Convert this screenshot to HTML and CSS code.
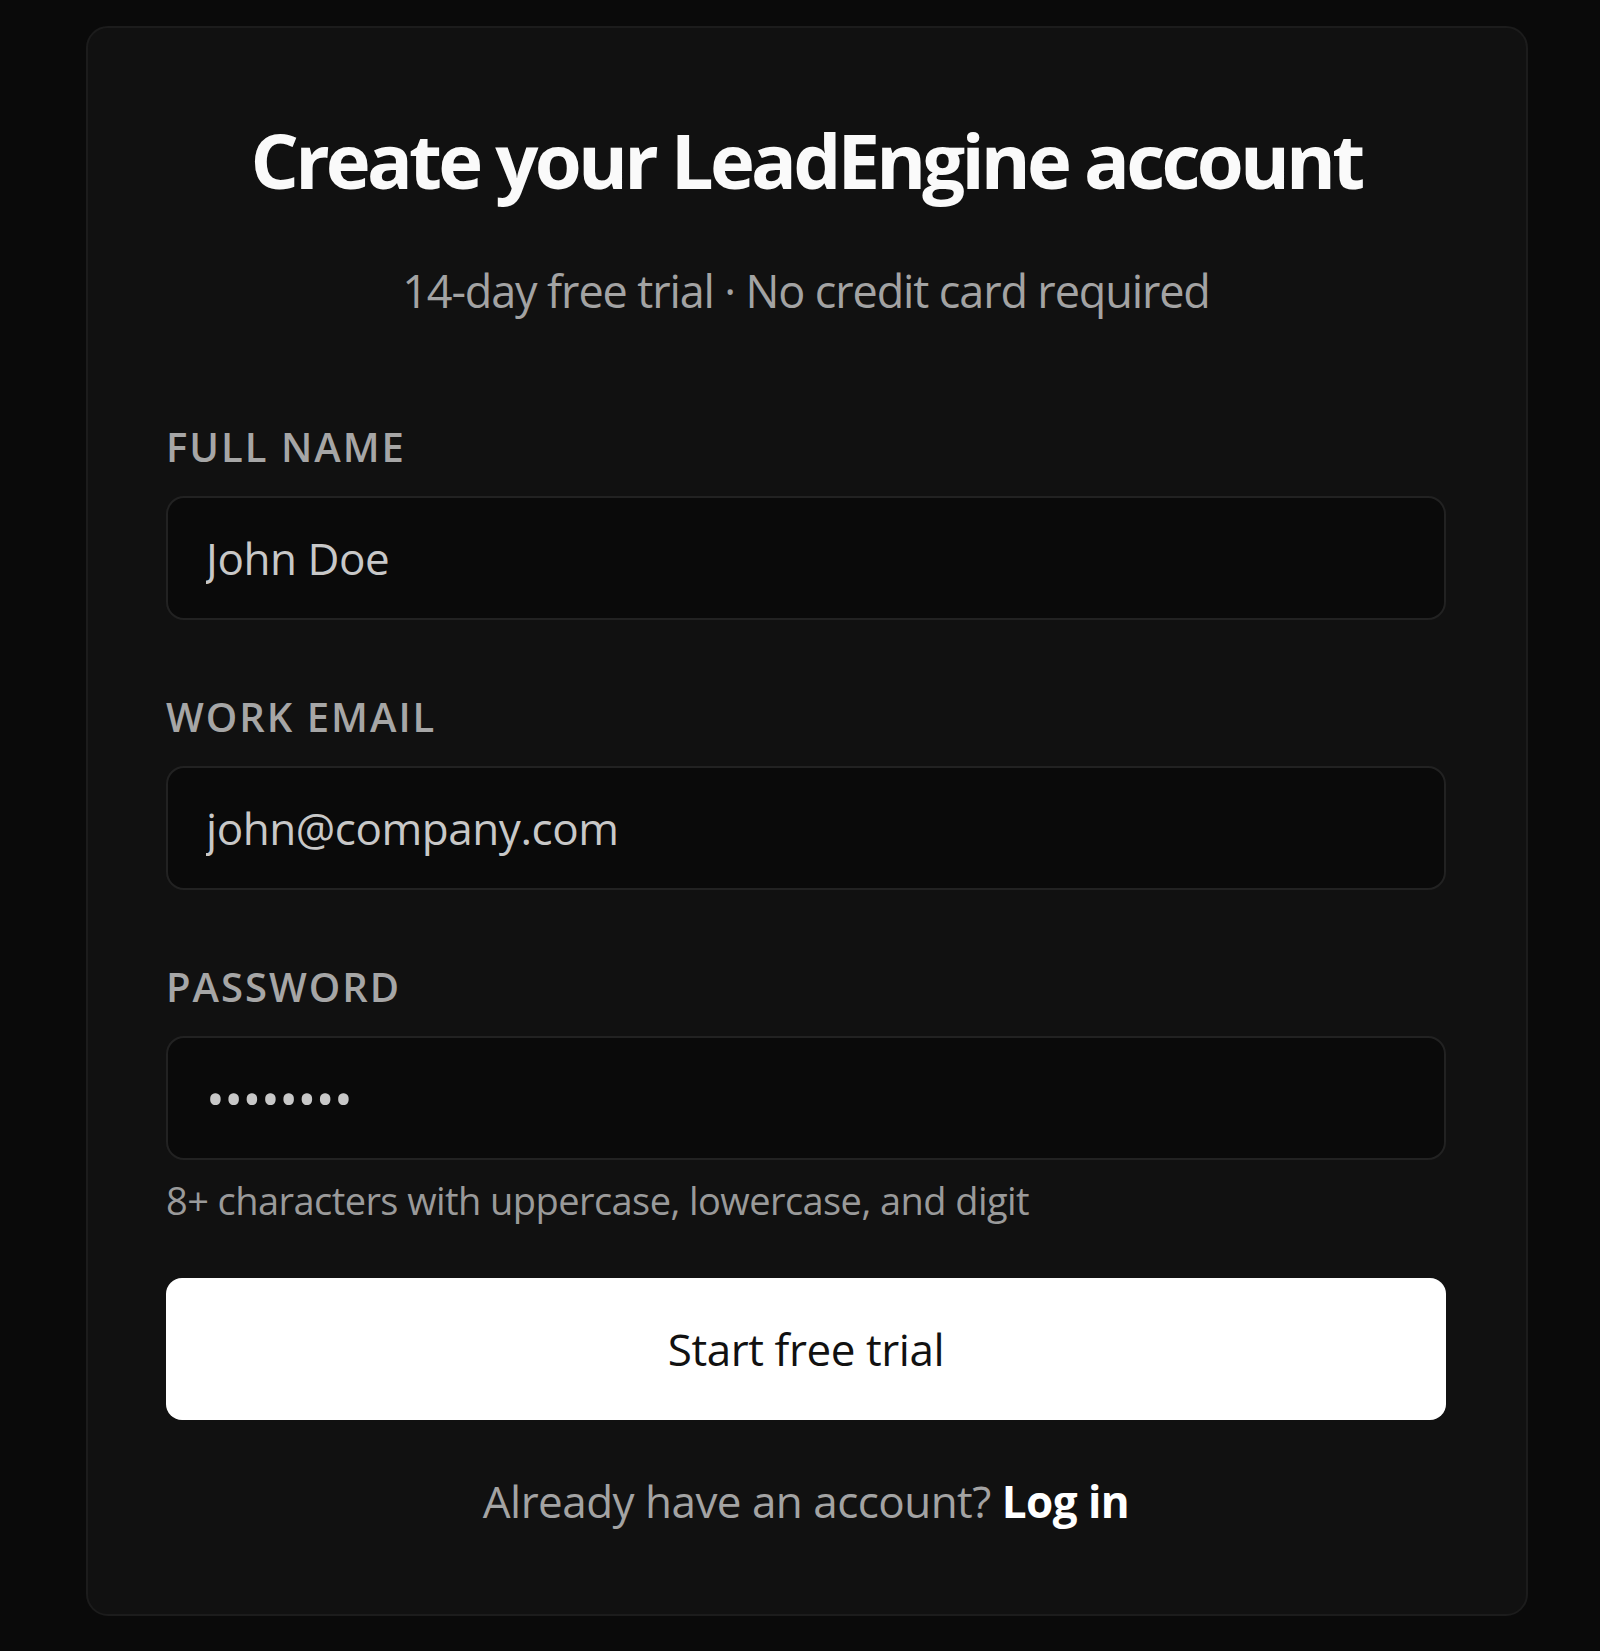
FILE: index.html
```html
<!DOCTYPE html>
<html lang="en">
<head>
    <meta charset="UTF-8">
    <meta name="viewport" content="width=device-width, initial-scale=1.0">
    <title>Sign up - LeadEngine</title>
    <link rel="stylesheet" href="styles.css">
</head>
<body>
    <div class="signup-card">
        <h1 class="signup-title">Create your LeadEngine account</h1>
        <p class="signup-sub">14-day free trial · No credit card required</p>

        <form class="signup-form" onsubmit="return false;">
            <div class="field">
                <label for="fullName">Full name</label>
                <input type="text" id="fullName" value="John Doe">
            </div>
            <div class="field">
                <label for="workEmail">Work email</label>
                <input type="email" id="workEmail" value="john@company.com">
            </div>
            <div class="field">
                <label for="password">Password</label>
                <input type="password" id="password" value="password">
                <p class="hint">8+ characters with uppercase, lowercase, and digit</p>
            </div>
            <button type="submit" class="submit-button">Start free trial</button>
        </form>

        <p class="switch-link">Already have an account? <a href="#">Log in</a></p>
    </div>
</body>
</html>
```

FILE: styles.css
```css
* {
    box-sizing: border-box;
}
body {
    margin: 0;
    background: #0a0a0a;
    font-family: "Open Sans", "Noto Sans", sans-serif;
    color: #fafafa;
}
.signup-card {
    width: 1442px;
    margin: 26px 0 0 86px;
    padding: 94px 80px 91px 78px;
    background: #111111;
    border: 2px solid #1c1c1c;
    border-radius: 22px;
}
.signup-title {
    margin: 0;
    font-size: 76px;
    line-height: 1;
    font-weight: 700;
    text-align: center;
    letter-spacing: -0.05em;
}
.signup-sub {
    margin: 70px 0 0;
    font-size: 45px;
    line-height: 1;
    text-align: center;
    color: #a3a3a3;
    letter-spacing: -0.025em;
}
.signup-form {
    margin-top: 114px;
}
.field + .field {
    margin-top: 77px;
}
.field label {
    display: block;
    margin-bottom: 29px;
    font-size: 40px;
    line-height: 1;
    font-weight: 600;
    letter-spacing: 0.05em;
    text-transform: uppercase;
    color: #a6a6a6;
}
.field input {
    display: block;
    width: 100%;
    height: 124px;
    padding: 0 38px;
    background: #0a0a0a;
    border: 2px solid #222222;
    border-radius: 18px;
    font-family: inherit;
    font-size: 44px;
    color: #c8c8c8;
    letter-spacing: -0.01em;
    outline: none;
}
.field input[type="password"] {
    font-size: 50px;
}
.hint {
    margin: 21px 0 0;
    font-size: 38px;
    line-height: 1;
    color: #9a9a9a;
    letter-spacing: -0.015em;
}
.submit-button {
    display: block;
    width: 100%;
    height: 142px;
    margin-top: 59px;
    background: #ffffff;
    color: #111111;
    border: 0;
    border-radius: 16px;
    font-family: inherit;
    font-size: 44px;
    letter-spacing: -0.01em;
    cursor: pointer;
}
.switch-link {
    margin: 59px 0 0;
    font-size: 44px;
    line-height: 1;
    text-align: center;
    color: #a3a3a3;
    letter-spacing: -0.012em;
}
.switch-link a {
    color: #ffffff;
    font-weight: 700;
    text-decoration: none;
}
```
